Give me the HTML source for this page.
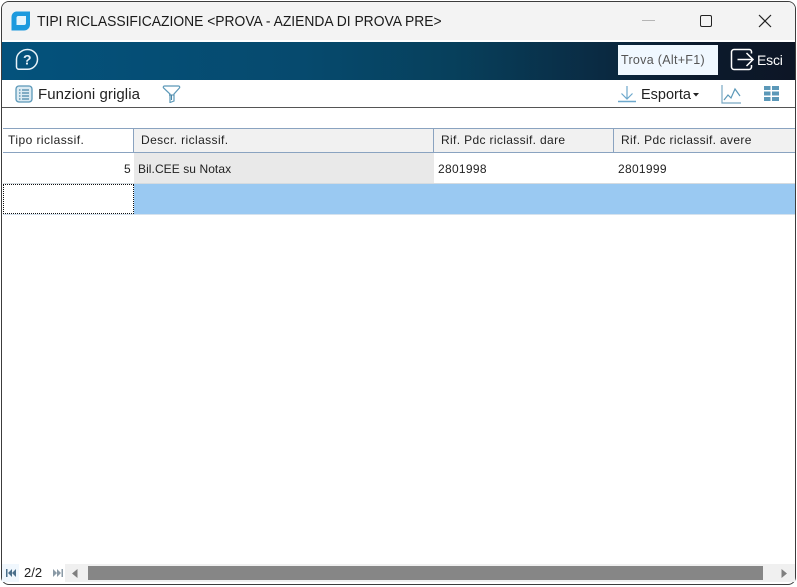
<!DOCTYPE html>
<html><head><meta charset="utf-8"><style>
html,body{margin:0;padding:0;background:#fff}
body{width:797px;height:587px;overflow:hidden;position:relative;font-family:"Liberation Sans",sans-serif;color:#1a1a1a}
div,span,svg{position:absolute}
.t{white-space:nowrap}
.g{font-size:12px;letter-spacing:.3px;line-height:14px;color:#222}
</style></head><body>
<div style="left:1px;top:1px;width:793px;height:582px;border:1px solid #3c3c3c;border-radius:8px;background:#fff;overflow:hidden">
<div style="left:0;top:0;width:793px;height:38px;background:#f3f3f3"></div>
<div style="left:0;top:40px;width:793px;height:38px;background:linear-gradient(90deg,#04527c 0,#064a6e 300px,#07405c 450px,#0a2a42 600px,#0c1a2c 700px,#0d1626 793px)"></div>
<div style="left:0;top:105px;width:793px;height:1px;background:#555"></div>
</div>
<svg style="left:10px;top:10px" width="22" height="22" viewBox="0 0 22 22"><path d="M6 1.500h14v13a6 6 0 0 1-6 6H1.500V7a5.500 5.500 0 0 1 4.500-5.500z" fill="#1c9ade"/><path d="M8 6h8v7a2 2 0 0 1-2 2H6.500V8A2 2 0 0 1 8 6z" fill="#e4f4fc"/></svg>
<div class="t" style="left:37px;top:13px;font-size:15px;line-height:18px;transform:scaleX(.924);transform-origin:0 0">TIPI RICLASSIFICAZIONE &lt;PROVA - AZIENDA DI PROVA PRE&gt;</div>
<div style="left:642px;top:20px;width:13px;height:1px;background:#b5b5b5"></div>
<div style="left:700px;top:15px;width:10px;height:10px;border:1.300px solid #222;border-radius:2px"></div>
<svg style="left:758px;top:14px" width="14" height="14" viewBox="0 0 14 14"><path d="M1 1l12 12M13 1L1 13" stroke="#222" stroke-width="1.200" fill="none"/></svg>
<svg style="left:15px;top:48px" width="24" height="23" viewBox="0 0 24 23"><path d="M12.500 1.500c5.500 0 10 4.300 10 9.800s-4.500 10-10 10H4a2.500 2.500 0 0 1-2.500-2.500v-7.500c0-5.500 5.500-9.800 11-9.800z" fill="none" stroke="#e8f2f8" stroke-width="1.500"/><text x="12.300" y="16.500" text-anchor="middle" font-family="Liberation Sans" font-weight="bold" font-size="14" fill="#e8f2f8">?</text></svg>
<div style="left:618px;top:45px;width:100px;height:30px;background:#f0f8ff"></div>
<div class="t" style="left:621px;top:53px;font-size:12.500px;line-height:15px;color:#555;letter-spacing:.3px">Trova (Alt+F1)</div>
<svg style="left:730px;top:48px" width="25" height="23" viewBox="0 0 25 23"><path d="M21.500 5.500V3.500A2.500 2.500 0 0 0 19 1.500H4A2.500 2.500 0 0 0 1.500 4v15A2.500 2.500 0 0 0 4 21.500h15a2.500 2.500 0 0 0 2.500-2.500v-2" fill="none" stroke="#fff" stroke-width="1.500"/><path d="M7.500 11.500h15M16.500 5l6.500 6.500-6.500 6.500" fill="none" stroke="#fff" stroke-width="1.500"/></svg>
<div class="t" style="left:757px;top:52px;font-size:14px;line-height:16px;color:#fff;letter-spacing:-.2px">Esci</div>
<svg style="left:15px;top:85px" width="18" height="18" viewBox="0 0 18 18"><rect x="1" y="1" width="16" height="16" rx="3" fill="#dcebf3" stroke="#5b98b8" stroke-width="1.300"/><path d="M4 5h1.500M7 5h7M4 8h1.500M7 8h7M4 11h1.500M7 11h7M4 14h1.500M7 14h7" stroke="#4a87a8" stroke-width="1.200"/></svg>
<div class="t" style="left:38px;top:86px;font-size:15px;line-height:18px;color:#222;letter-spacing:.07px">Funzioni griglia</div>
<svg style="left:162px;top:85px" width="19" height="18" viewBox="0 0 19 18"><path d="M2.500 1h14a1.200 1.200 0 0 1 .9 2l-5.400 6v7l-4 1.500V9L1.600 3a1.200 1.200 0 0 1 .9-2z" fill="#fff" stroke="#5b98b8" stroke-width="1.200"/><path d="M7 10h5M9.500 10v5" stroke="#4a87a8" stroke-width="1.100"/></svg>
<svg style="left:618px;top:85px" width="18" height="18" viewBox="0 0 18 18"><path d="M9 1v13M3.500 8.500L9 14l5.500-5.500" fill="none" stroke="#6da8cc" stroke-width="1.200"/><path d="M0 16.500h18" stroke="#6da8cc" stroke-width="1.500"/></svg>
<div class="t" style="left:641px;top:86px;font-size:14.500px;line-height:18px;color:#222">Esporta</div>
<svg style="left:693px;top:93px" width="6" height="4" viewBox="0 0 6 4"><path d="M0 0h6L3 3.500z" fill="#222"/></svg>
<svg style="left:721px;top:84px" width="20" height="20" viewBox="0 0 20 20"><path d="M1 1v18h19" fill="none" stroke="#7aa9c4" stroke-width="1.200"/><path d="M3 16l4-5 3 3 4-9 5 7" fill="none" stroke="#5b98b8" stroke-width="1.200"/></svg>
<svg style="left:764px;top:86px" width="15" height="15" viewBox="0 0 15 15" fill="#5b98b8"><rect width="6.500" height="4"/><rect x="8" width="7" height="4"/><rect y="5.500" width="6.500" height="4"/><rect x="8" y="5.500" width="7" height="4"/><rect y="11" width="6.500" height="4"/><rect x="8" y="11" width="7" height="4"/></svg>
<div style="left:3px;top:128px;width:792px;height:1px;background:#8aa3c0"></div>
<div style="left:134px;top:129px;width:661px;height:23px;background:#f1f1f1"></div>
<div style="left:133px;top:128px;width:1px;height:24px;background:#8aa3c0"></div>
<div style="left:433px;top:128px;width:1px;height:24px;background:#8aa3c0"></div>
<div style="left:613px;top:128px;width:1px;height:24px;background:#8aa3c0"></div>
<div style="left:3px;top:152px;width:792px;height:1px;background:#8aa3c0"></div>
<div class="t g" style="left:8px;top:133px;letter-spacing:.45px">Tipo riclassif.</div>
<div class="t g" style="left:141px;top:133px;letter-spacing:.4px">Descr. riclassif.</div>
<div class="t g" style="left:441px;top:133px;letter-spacing:.35px">Rif. Pdc riclassif. dare</div>
<div class="t g" style="left:621px;top:133px;letter-spacing:.35px">Rif. Pdc riclassif. avere</div>
<div style="left:134px;top:153px;width:300px;height:30px;background:#e9e9e9"></div>
<div style="left:3px;top:183px;width:792px;height:1px;background:#d5dbe0"></div>
<div class="t g" style="left:124px;top:162px">5</div>
<div class="t g" style="left:138px;top:162px;letter-spacing:.07px">Bil.CEE su Notax</div>
<div class="t g" style="left:438px;top:162px">2801998</div>
<div class="t g" style="left:618px;top:162px">2801999</div>
<div style="left:134px;top:184px;width:661px;height:30px;background:#9ac9f2"></div>
<div style="left:3px;top:214px;width:792px;height:1px;background:#d5e2ee"></div>
<div style="left:3px;top:184px;width:129px;height:28px;border:1px dotted #111;background:#fff"></div>
<div style="left:2px;top:564px;width:793px;height:18px;background:#f0f0f0"></div>
<div style="left:2px;top:564px;width:17px;height:18px;background:#f0f7fd"></div>
<div style="left:19px;top:564px;width:46px;height:18px;background:#fff"></div>
<svg style="left:6px;top:569px" width="10" height="8" viewBox="0 0 10 8" fill="#4a6f8a"><rect width="1.500" height="8"/><path d="M6 0v8L2 4zM10 0v8L6 4z"/></svg>
<div class="t" style="left:24px;top:565px;font-size:13px;line-height:16px;color:#222">2/2</div>
<svg style="left:53px;top:569px" width="10" height="8" viewBox="0 0 10 8" fill="#8a9aa6"><rect x="8.500" width="1.500" height="8"/><path d="M4 0v8l4-4zM0 0v8l4-4z"/></svg>
<svg style="left:72px;top:569px" width="6" height="9" viewBox="0 0 6 9"><path d="M5.500 0v9L0 4.500z" fill="#7f7f7f"/></svg>
<div style="left:88px;top:566px;width:675px;height:14px;background:#868686"></div>
<svg style="left:781px;top:569px" width="6" height="9" viewBox="0 0 6 9"><path d="M.500 0v9L6 4.500z" fill="#7f7f7f"/></svg>
</body></html>
